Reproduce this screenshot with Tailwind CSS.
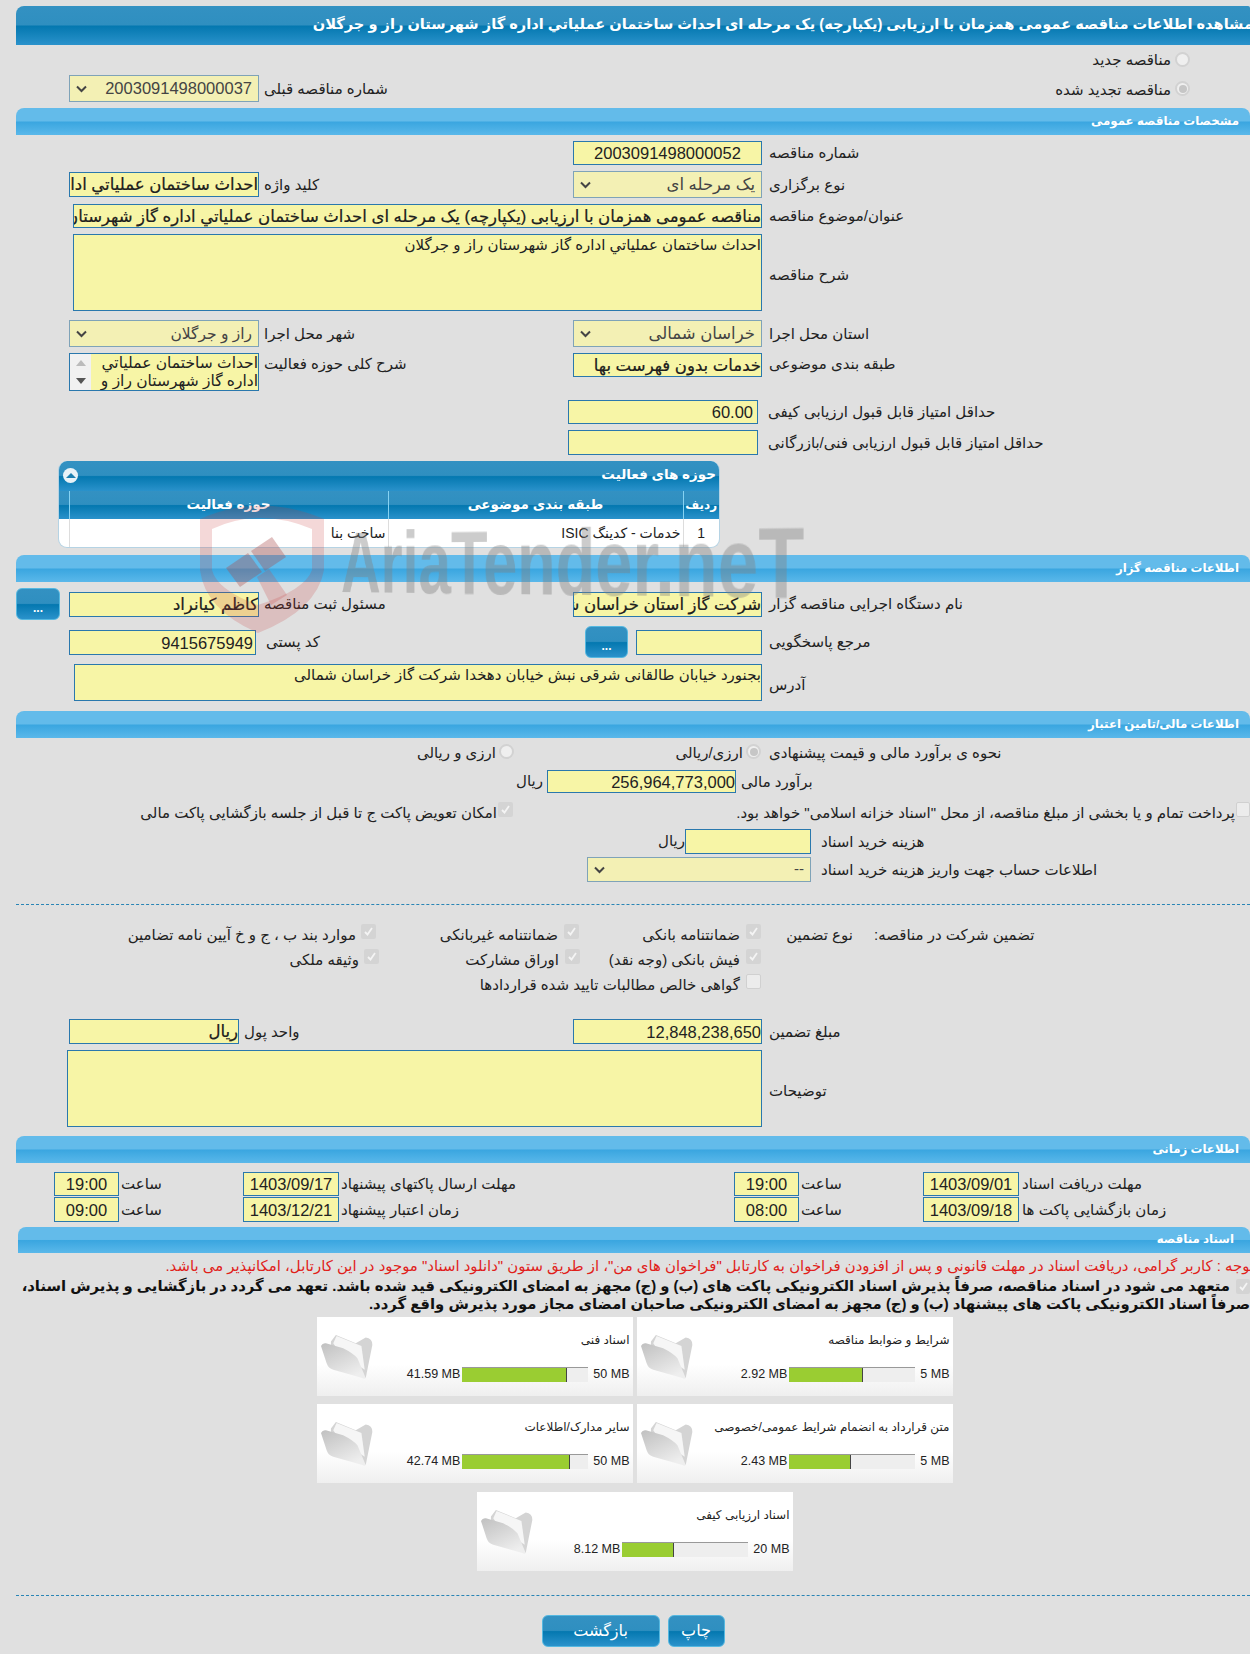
<!DOCTYPE html>
<html lang="fa" dir="rtl">
<head>
<meta charset="UTF-8">
<title>مشاهده اطلاعات مناقصه</title>
<script src="https://cdn.jsdelivr.net/npm/@tailwindcss/browser@4"></script>
</head>
<body class="relative w-[1250px] h-[1654px] overflow-hidden bg-[#e0e0e0] pt-[6px] text-[#222] text-[15px] font-['Liberation_Sans','DejaVu_Sans',sans-serif]">

<svg class="absolute w-0 h-0">
	<defs>
		<linearGradient id="folderFront" x1="0" y1="0" x2="0.6" y2="1">
			<stop offset="0" stop-color="#c0c0c0"/>
			<stop offset="1" stop-color="#eeeeee"/>
		</linearGradient>
	</defs>
	<symbol id="folder" viewBox="0 0 160 140">
		<path d="M33 25 L48 5 L108 30 L138 13 Q158 15 158 35 L138 135 L33 60 Z" fill="#d4d4d4"/>
		<path d="M40 30 L50 8 L125 38 L135 110 L60 60 Z" fill="#f6f6f6"/>
		<path d="M3 38 Q8 28 18 30 L70 45 Q100 60 113 75 L138 135 Q135 140 128 135 L40 110 Q25 105 20 90 Z" fill="url(#folderFront)"/>
	</symbol>
</svg>

<!-- title -->
<div class="ml-[16px] h-[39px] rounded-tl-[8px] rounded-tr-[2px] overflow-hidden bg-[linear-gradient(#3391c2_0%,#2f8fc0_48%,#0478b0_52%,#2a92cb_100%)] text-white font-bold text-[14.6px] leading-[37px] whitespace-nowrap"><span class="block mr-[-3px]">مشاهده اطلاعات مناقصه عمومی همزمان با ارزیابی (یکپارچه) یک مرحله ای احداث ساختمان عملیاتي اداره گاز شهرستان راز و جرگلان</span></div>

<!-- new / renewed -->
<div class="flex items-center h-[28px]">
	<span class="w-[15px] h-[15px] mr-[60px] rounded-full border-2 border-[#d2d2d2] bg-[#efefef]"></span>
	<span class="mr-[4px] mt-[3px]">مناقصه جدید</span>
</div>
<div class="flex items-center h-[27px] mt-[2px]">
	<span class="flex items-center justify-center w-[15px] h-[15px] mr-[60px] rounded-full border-2 border-[#d2d2d2] bg-[#efefef]"><span class="w-[8px] h-[8px] rounded-full bg-[#c6c6c6]"></span></span>
	<span class="w-[781px] mr-[4px] mt-[3px]">مناقصه تجدید شده</span>
	<div class="w-[126px] mt-[1px] whitespace-nowrap"><span class="float-left">شماره مناقصه قبلی</span></div>
	<div class="flex items-center justify-between w-[190px] h-[27px] mr-[5px] px-[6px] border border-[#7fa3b8] bg-[#f3f0b4] text-[#444] text-[16.5px]"><span>2003091498000037</span><svg class="w-[11px] h-[8px]" viewBox="0 0 11 8"><path d="M1 1.5 L5.5 6 L10 1.5" fill="none" stroke="#444" stroke-width="2"/></svg></div>
</div>

<!-- general -->
<div class="ml-[16px] h-[27px] mt-[6px] pr-[11px] rounded-t-[8px] bg-[linear-gradient(#63bbea_0%,#63bbea_48%,#3aa6e0_52%,#5ab8ea_100%)] text-white font-bold text-[11.8px] leading-[26px]">مشخصات مناقصه عمومی</div>

<div class="flex items-center h-[24px] mt-[6px]">
	<div class="w-[481px] mt-[1px]"><span class="float-left">شماره مناقصه</span></div>
	<div class="w-[189px] h-[24px] mr-[7px] px-[20px] border border-[#2a78ad] bg-[#f7f5a6] text-center text-[16.5px] leading-[23px]">2003091498000052</div>
</div>
<div class="flex items-center h-[27px] mt-[6px]">
	<div class="w-[481px] mt-[1px]"><span class="float-left">نوع برگزاری</span></div>
	<div class="flex items-center justify-between w-[189px] h-[27px] mr-[7px] px-[6px] border border-[#7fa3b8] bg-[#f3f0b4] text-[#444] text-[16.5px]"><span>یک مرحله ای</span><svg class="w-[11px] h-[8px]" viewBox="0 0 11 8"><path d="M1 1.5 L5.5 6 L10 1.5" fill="none" stroke="#444" stroke-width="2"/></svg></div>
	<div class="w-[309px] mt-[1px]"><span class="float-left">کلید واژه</span></div>
	<div class="w-[190px] h-[25px] mr-[5px] border border-[#2a78ad] bg-[#f7f5a6] text-[16.5px] leading-[23px] overflow-hidden whitespace-nowrap [-webkit-text-stroke:0.2px_#000]">احداث ساختمان عملياتي اداره گاز شهرستان راز و جرگلان</div>
</div>
<div class="flex items-center h-[24px] mt-[6px]">
	<div class="w-[481px] mt-[1px]"><span class="float-left">عنوان/موضوع مناقصه</span></div>
	<div class="w-[689px] h-[24px] mr-[7px] border border-[#2a78ad] bg-[#f7f5a6] text-[16.5px] leading-[22px] overflow-hidden whitespace-nowrap [-webkit-text-stroke:0.2px_#000]">مناقصه عمومی همزمان با ارزیابی (یکپارچه) یک مرحله ای احداث ساختمان عملیاتي اداره گاز شهرستان راز و جرگلان</div>
</div>
<div class="flex items-center h-[77px] mt-[6px]">
	<div class="w-[481px] mt-[5px]"><span class="float-left">شرح مناقصه</span></div>
	<div class="w-[689px] h-[77px] mr-[7px] border border-[#2a78ad] bg-[#f7f5a6] text-[15px] leading-[20px]">احداث ساختمان عملیاتي اداره گاز شهرستان راز و جرگلان</div>
</div>
<div class="flex items-center h-[27px] mt-[9px]">
	<div class="w-[481px] mt-[1px]"><span class="float-left">استان محل اجرا</span></div>
	<div class="flex items-center justify-between w-[189px] h-[27px] mr-[7px] px-[6px] border border-[#7fa3b8] bg-[#f3f0b4] text-[#444] text-[16.5px]"><span>خراسان شمالی</span><svg class="w-[11px] h-[8px]" viewBox="0 0 11 8"><path d="M1 1.5 L5.5 6 L10 1.5" fill="none" stroke="#444" stroke-width="2"/></svg></div>
	<div class="w-[309px] mt-[1px]"><span class="float-left">شهر محل اجرا</span></div>
	<div class="flex items-center justify-between w-[190px] h-[27px] mr-[5px] px-[6px] border border-[#7fa3b8] bg-[#f3f0b4] text-[#444] text-[15.5px]"><span>راز و جرگلان</span><svg class="w-[11px] h-[8px]" viewBox="0 0 11 8"><path d="M1 1.5 L5.5 6 L10 1.5" fill="none" stroke="#444" stroke-width="2"/></svg></div>
</div>
<div class="flex items-start h-[38px] mt-[6px]">
	<div class="w-[481px] h-[21px]"><span class="float-left">طبقه بندی موضوعی</span></div>
	<div class="w-[189px] h-[24px] mr-[7px] border border-[#2a78ad] bg-[#f7f5a6] text-[16.5px] leading-[23px] overflow-hidden whitespace-nowrap [-webkit-text-stroke:0.2px_#000]">خدمات بدون فهرست بها</div>
	<div class="w-[309px] h-[21px]"><span class="float-left">شرح کلی حوزه فعالیت</span></div>
	<div class="flex w-[190px] h-[38px] mr-[5px] border border-[#2a78ad] bg-[#f7f5a6] text-[15.5px] leading-[18px] overflow-hidden">
		<div class="flex-1 whitespace-nowrap overflow-hidden">احداث ساختمان عملیاتي<br>اداره گاز شهرستان راز و</div>
		<div class="flex flex-col justify-between items-center w-[21px] py-[6px] bg-[#f1f1f1]"><span class="w-0 h-0 border-x-[5px] border-x-transparent border-b-[6px] border-b-[#bbb]"></span><span class="w-0 h-0 border-x-[5px] border-x-transparent border-t-[6px] border-t-[#555]"></span></div>
	</div>
</div>
<div class="flex items-center h-[24px] mt-[9px]">
	<div class="w-[482px] mt-[1px]"><span class="float-left">حداقل امتیاز قابل قبول ارزیابی کیفی</span></div>
	<div class="w-[190px] h-[24px] mr-[10px] px-[4px] border border-[#2a78ad] bg-[#f7f5a6] text-[16.5px] leading-[23px]">60.00</div>
</div>
<div class="flex items-center h-[25px] mt-[6px]">
	<div class="w-[482px] mt-[1px]"><span class="float-left">حداقل امتیاز قابل قبول ارزیابی فنی/بازرگانی</span></div>
	<div class="w-[190px] h-[25px] mr-[10px] border border-[#2a78ad] bg-[#f7f5a6]"></div>
</div>

<!-- activity table -->
<div class="w-[662px] h-[87px] mt-[6px] mr-[530px] rounded-[9px] overflow-hidden border-b border-x border-[#b5d3e4] bg-white">
	<div class="relative h-[30px] pr-[3px] bg-[linear-gradient(#3391c2_0%,#2f8fc0_48%,#0478b0_52%,#2a92cb_100%)] text-white font-bold text-[13.5px] leading-[28px]">حوزه های فعالیت
		<span class="absolute left-[4px] top-[7px] flex items-center justify-center w-[15px] h-[15px] rounded-full bg-[#e8f2f7]"><span class="w-0 h-0 border-x-[5px] border-x-transparent border-b-[5px] border-b-[#1d7fb0]"></span></span>
	</div>
	<table class="w-full table-fixed border-collapse">
		<thead>
			<tr class="h-[28px] bg-[linear-gradient(#3391c2_0%,#2f8fc0_48%,#0478b0_52%,#2a92cb_100%)] text-white text-[13.5px]">
				<th class="w-[36px] font-bold text-[12px] border-l border-[#86d2f2]">ردیف</th>
				<th class="w-[295px] font-bold border-l border-[#86d2f2]">طبقه بندی موضوعی</th>
				<th class="w-[319px] font-bold border-l border-[#86d2f2]">حوزه فعالیت</th>
				<th class="w-[12px]"></th>
			</tr>
		</thead>
		<tbody>
			<tr class="h-[29px] text-[14px]">
				<td class="text-center border-l border-[#ddd]">1</td>
				<td class="pr-[2px] border-l border-[#ddd]">خدمات - کدینگ ISIC</td>
				<td class="pr-[2px] border-l border-[#ddd]">ساخت بنا</td>
				<td></td>
			</tr>
		</tbody>
	</table>
</div>

<!-- organizer -->
<div class="ml-[16px] h-[27px] mt-[7px] pr-[11px] rounded-t-[8px] bg-[linear-gradient(#63bbea_0%,#63bbea_48%,#3aa6e0_52%,#5ab8ea_100%)] text-white font-bold text-[11.8px] leading-[26px]">اطلاعات مناقصه گزار</div>

<div class="flex items-center h-[32px] mt-[6px]">
	<div class="w-[481px] mt-[1px]"><span class="float-left">نام دستگاه اجرایی مناقصه گزار</span></div>
	<div class="w-[189px] h-[25px] mr-[7px] border border-[#2a78ad] bg-[#f7f5a6] text-[16.5px] leading-[23px] overflow-hidden whitespace-nowrap [-webkit-text-stroke:0.2px_#000]">شرکت گاز استان خراسان شمالی</div>
	<div class="w-[309px] mt-[1px]"><span class="float-left">مسئول ثبت مناقصه</span></div>
	<div class="w-[190px] h-[25px] mr-[5px] border border-[#2a78ad] bg-[#f7f5a6] text-[16.5px] leading-[23px] overflow-hidden whitespace-nowrap [-webkit-text-stroke:0.2px_#000]">کاظم کیانراد</div>
	<button class="w-[44px] h-[32px] mr-[9px] pt-[8px] rounded-[6px] border border-[#55b8e0] bg-[linear-gradient(#3391c2_0%,#2f8fc0_48%,#0478b0_52%,#2a92cb_100%)] text-white font-bold text-[12px] leading-[20px]">...</button>
</div>
<div class="flex items-center h-[32px] mt-[6px]">
	<div class="w-[481px] mt-[1px]"><span class="float-left">مرجع پاسخگویی</span></div>
	<div class="w-[126px] h-[25px] mr-[7px] border border-[#2a78ad] bg-[#f7f5a6]"></div>
	<button class="w-[43px] h-[32px] mr-[8px] pt-[8px] rounded-[6px] border border-[#55b8e0] bg-[linear-gradient(#3391c2_0%,#2f8fc0_48%,#0478b0_52%,#2a92cb_100%)] text-white font-bold text-[12px] leading-[20px]">...</button>
	<div class="w-[319px] mt-[1px]"><span class="float-left">کد پستی</span></div>
	<div class="w-[187px] h-[25px] mr-[10px] px-[2px] border border-[#2a78ad] bg-[#f7f5a6] text-[16.5px] leading-[24px]">9415675949</div>
</div>
<div class="flex items-center h-[37px] mt-[6px]">
	<div class="w-[481px] mt-[5px]"><span class="float-left">آدرس</span></div>
	<div class="w-[688px] h-[37px] mr-[7px] border border-[#2a78ad] bg-[#f7f5a6] text-[15px] leading-[20px]">بجنورد خیابان طالقانی شرقی نبش خیابان دهخدا شرکت گاز خراسان شمالی</div>
</div>

<!-- finance -->
<div class="ml-[16px] h-[27px] mt-[10px] pr-[11px] rounded-t-[8px] bg-[linear-gradient(#63bbea_0%,#63bbea_48%,#3aa6e0_52%,#5ab8ea_100%)] text-white font-bold text-[11.8px] leading-[26px]">اطلاعات مالی/تامین اعتبار</div>

<div class="flex items-center h-[22px] mt-[3px]">
	<div class="w-[481px] mt-[3px]"><span class="float-left">نحوه ی برآورد مالی و قیمت پیشنهادی</span></div>
	<span class="flex items-center justify-center w-[15px] h-[15px] mr-[8px] mb-[1px] rounded-full border-2 border-[#d2d2d2] bg-[#efefef]"><span class="w-[8px] h-[8px] rounded-full bg-[#c6c6c6]"></span></span>
	<span class="w-[229px] mr-[3px] mt-[3px]">ارزی/ریالی</span>
	<span class="w-[15px] h-[15px] mb-[1px] rounded-full border-2 border-[#d2d2d2] bg-[#efefef]"></span>
	<span class="mr-[3px] mt-[3px]">ارزی و ریالی</span>
</div>
<div class="flex items-center h-[23px] mt-[7px]">
	<div class="w-[509px] mt-[1px]"><span class="float-left">برآورد مالی</span></div>
	<div class="w-[189px] h-[23px] mr-[5px] border border-[#2a78ad] bg-[#f7f5a6] text-[16.5px] leading-[22px]">256,964,773,000</div>
	<span class="mr-[4px]">ریال</span>
</div>
<div class="flex items-start h-[20px] mt-[9px]">
	<span class="w-[14px] h-[15px] rounded-[2px] border border-[#d0d0d0] bg-[#ececec]"></span>
	<span class="w-[722px] mr-[1px] leading-[21px]">پرداخت تمام و یا بخشی از مبلغ مناقصه، از محل "اسناد خزانه اسلامی" خواهد بود.</span>
	<span class="flex items-center justify-center w-[15px] h-[15px] rounded-[2px] bg-[#d4d4d4]"><svg class="w-[11px] h-[11px]" viewBox="0 0 11 11"><path d="M2 6 L4.5 8.5 L9 2" fill="none" stroke="#f4f4f4" stroke-width="1.8"/></svg></span>
	<span class="mr-[1px] leading-[21px]">امکان تعویض پاکت ج تا قبل از جلسه بازگشایی پاکت مالی</span>
</div>
<div class="flex items-center h-[25px] mt-[7px]">
	<div class="w-[429px] mt-[1px]"><span class="float-left">هزینه خرید اسناد</span></div>
	<div class="w-[126px] h-[25px] mr-[10px] border border-[#2a78ad] bg-[#f7f5a6]"></div>
	<span>ریال</span>
</div>
<div class="flex items-center h-[25px] mt-[3px]">
	<div class="w-[429px] mt-[1px]"><span class="float-left">اطلاعات حساب جهت واریز هزینه خرید اسناد</span></div>
	<div class="flex items-center justify-between w-[224px] h-[25px] mr-[10px] px-[6px] border border-[#7fa3b8] bg-[#f3f0b4] text-[#444] text-[15px]"><span>--</span><svg class="w-[11px] h-[8px]" viewBox="0 0 11 8"><path d="M1 1.5 L5.5 6 L10 1.5" fill="none" stroke="#444" stroke-width="2"/></svg></div>
</div>

<div class="ml-[16px] mt-[22px] border-t border-dashed border-[#2a85b5]"></div>

<!-- guarantee -->
<div class="flex items-start h-[25px] mt-[19px]">
	<div class="flex w-[489px] leading-[22px]"><div class="w-[376px]"><span class="float-left">تضمین شرکت در مناقصه:</span></div><span class="mr-[21px] whitespace-nowrap">نوع تضمین</span></div>
	<span class="flex items-center justify-center w-[15px] h-[15px] rounded-[2px] bg-[#d4d4d4]"><svg class="w-[11px] h-[11px]" viewBox="0 0 11 11"><path d="M2 6 L4.5 8.5 L9 2" fill="none" stroke="#f4f4f4" stroke-width="1.8"/></svg></span>
	<span class="w-[161px] mr-[6px] leading-[22px]">ضمانتنامه بانکی</span>
	<span class="flex items-center justify-center w-[15px] h-[15px] rounded-[2px] bg-[#d4d4d4]"><svg class="w-[11px] h-[11px]" viewBox="0 0 11 11"><path d="M2 6 L4.5 8.5 L9 2" fill="none" stroke="#f4f4f4" stroke-width="1.8"/></svg></span>
	<span class="w-[182px] mr-[6px] leading-[22px]">ضمانتنامه غیربانکی</span>
	<span class="flex items-center justify-center w-[15px] h-[15px] rounded-[2px] bg-[#d4d4d4]"><svg class="w-[11px] h-[11px]" viewBox="0 0 11 11"><path d="M2 6 L4.5 8.5 L9 2" fill="none" stroke="#f4f4f4" stroke-width="1.8"/></svg></span>
	<span class="mr-[5px] leading-[22px]">موارد بند ب ، ج و خ آیین نامه تضامین</span>
</div>
<div class="flex items-start h-[25px] pr-[489px]">
	<span class="flex items-center justify-center w-[15px] h-[15px] rounded-[2px] bg-[#d4d4d4]"><svg class="w-[11px] h-[11px]" viewBox="0 0 11 11"><path d="M2 6 L4.5 8.5 L9 2" fill="none" stroke="#f4f4f4" stroke-width="1.8"/></svg></span>
	<span class="w-[160px] mr-[6px] leading-[22px]">فیش بانکی (وجه نقد)</span>
	<span class="flex items-center justify-center w-[15px] h-[15px] rounded-[2px] bg-[#d4d4d4]"><svg class="w-[11px] h-[11px]" viewBox="0 0 11 11"><path d="M2 6 L4.5 8.5 L9 2" fill="none" stroke="#f4f4f4" stroke-width="1.8"/></svg></span>
	<span class="w-[180px] mr-[6px] leading-[22px]">اوراق مشارکت</span>
	<span class="flex items-center justify-center w-[15px] h-[15px] rounded-[2px] bg-[#d4d4d4]"><svg class="w-[11px] h-[11px]" viewBox="0 0 11 11"><path d="M2 6 L4.5 8.5 L9 2" fill="none" stroke="#f4f4f4" stroke-width="1.8"/></svg></span>
	<span class="mr-[5px] leading-[22px]">وثیقه ملکی</span>
</div>
<div class="flex items-start h-[25px] pr-[489px]">
	<span class="w-[15px] h-[15px] rounded-[2px] border border-[#d0d0d0] bg-[#ececec]"></span>
	<span class="mr-[6px] leading-[22px]">گواهی خالص مطالبات تایید شده قراردادها</span>
</div>

<div class="flex items-center h-[25px] mt-[20px]">
	<div class="w-[481px] mt-[1px]"><span class="float-left">مبلغ تضمین</span></div>
	<div class="w-[189px] h-[25px] mr-[7px] border border-[#2a78ad] bg-[#f7f5a6] text-[16.5px] leading-[24px]">12,848,238,650</div>
	<div class="w-[329px] mt-[1px]"><span class="float-left">واحد پول</span></div>
	<div class="w-[170px] h-[25px] mr-[5px] border border-[#2a78ad] bg-[#f7f5a6] text-[16.5px] leading-[23px] [-webkit-text-stroke:0.2px_#000]">ریال</div>
</div>
<div class="flex items-center h-[77px] mt-[6px]">
	<div class="w-[481px] mt-[5px]"><span class="float-left">توضیحات</span></div>
	<div class="w-[695px] h-[77px] mr-[7px] border border-[#2a78ad] bg-[#f7f5a6]"></div>
</div>

<!-- dates -->
<div class="ml-[16px] h-[27px] mt-[9px] pr-[11px] rounded-t-[8px] bg-[linear-gradient(#63bbea_0%,#63bbea_48%,#3aa6e0_52%,#5ab8ea_100%)] text-white font-bold text-[11.8px] leading-[26px]">اطلاعات زمانی</div>

<div class="flex items-center h-[24px] mt-[9px]">
	<div class="w-[228px] mt-[1px]"><span class="float-left">مهلت دریافت اسناد</span></div>
	<div class="w-[96px] h-[24px] mr-[3px] border border-[#2a78ad] bg-[#f7f5a6] text-center text-[16.5px] leading-[23px]">1403/09/01</div>
	<div class="w-[122px] mt-[1px]"><span class="float-left">ساعت</span></div>
	<div class="w-[65px] h-[24px] mr-[2px] border border-[#2a78ad] bg-[#f7f5a6] text-center text-[16.5px] leading-[23px]">19:00</div>
	<div class="w-[393px] mt-[1px]"><span class="float-left">مهلت ارسال پاکتهای پیشنهاد</span></div>
	<div class="w-[96px] h-[24px] mr-[2px] border border-[#2a78ad] bg-[#f7f5a6] text-center text-[16.5px] leading-[23px]">1403/09/17</div>
	<div class="w-[122px] mt-[1px]"><span class="float-left">ساعت</span></div>
	<div class="w-[65px] h-[24px] mr-[2px] border border-[#2a78ad] bg-[#f7f5a6] text-center text-[16.5px] leading-[23px]">19:00</div>
</div>
<div class="flex items-center h-[25px] mt-[1px]">
	<div class="w-[228px] mt-[1px]"><span class="float-left">زمان بازگشایی پاکت ها</span></div>
	<div class="w-[96px] h-[25px] mr-[3px] border border-[#2a78ad] bg-[#f7f5a6] text-center text-[16.5px] leading-[24px]">1403/09/18</div>
	<div class="w-[122px] mt-[1px]"><span class="float-left">ساعت</span></div>
	<div class="w-[65px] h-[25px] mr-[2px] border border-[#2a78ad] bg-[#f7f5a6] text-center text-[16.5px] leading-[24px]">08:00</div>
	<div class="w-[393px] mt-[1px]"><span class="float-left">زمان اعتبار پیشنهاد</span></div>
	<div class="w-[96px] h-[25px] mr-[2px] border border-[#2a78ad] bg-[#f7f5a6] text-center text-[16.5px] leading-[24px]">1403/12/21</div>
	<div class="w-[122px] mt-[1px]"><span class="float-left">ساعت</span></div>
	<div class="w-[65px] h-[25px] mr-[2px] border border-[#2a78ad] bg-[#f7f5a6] text-center text-[16.5px] leading-[24px]">09:00</div>
</div>

<!-- documents -->
<div class="ml-[18px] h-[26px] mt-[5px] pr-[16px] rounded-t-[8px] bg-[linear-gradient(#63bbea_0%,#63bbea_48%,#3aa6e0_52%,#5ab8ea_100%)] text-white font-bold text-[11.8px] leading-[25px]">اسناد مناقصه</div>

<div class="h-[20px] mt-[3px] mr-[-4px] text-[#e0201a] text-[14.9px] leading-[20px] whitespace-nowrap">توجه : کاربر گرامی، دریافت اسناد در مهلت قانونی و پس از افزودن فراخوان به کارتابل "فراخوان های من"، از طریق ستون "دانلود اسناد" موجود در این کارتابل، امکانپذیر می باشد.</div>
<div class="relative mt-[1px] h-[36px] text-[14.8px] font-bold leading-[18px] whitespace-nowrap text-[#111]">
	<span class="absolute top-[2px] right-0 flex items-center justify-center w-[14px] h-[15px] rounded-[2px] bg-[#d4d4d4]"><svg class="w-[11px] h-[11px]" viewBox="0 0 11 11"><path d="M2 6 L4.5 8.5 L9 2" fill="none" stroke="#f4f4f4" stroke-width="1.8"/></svg></span>
	<div class="pr-[20px]">متعهد می شود در اسناد مناقصه، صرفاً پذیرش اسناد الکترونیکی پاکت های (ب) و (ج) مجهز به امضای الکترونیکی قید شده باشد. تعهد می گردد در بازگشایی و پذیرش اسناد،</div>
	<div>صرفاً اسناد الکترونیکی پاکت های پیشنهاد (ب) و (ج) مجهز به امضای الکترونیکی صاحبان امضای مجاز مورد پذیرش واقع گردد.</div>
</div>

<div class="flex flex-wrap justify-center gap-x-[4px] gap-y-[8px] w-[637px] h-[254px] mt-[4px] mr-[297px]">
	<div class="flex items-stretch w-[316px] h-[79px] bg-[linear-gradient(#fff_60%,#efefef_100%)]">
		<div class="flex-1 pt-[12px] pr-[3px]">
			<div class="h-[24px] text-[12px] leading-[22px]">شرایط و ضوابط مناقصه</div>
			<div class="flex items-center justify-end gap-[2px] mt-[12px] text-[12.5px]" dir="ltr"><span>2.92 MB</span><span class="flex w-[126px] h-[15px] bg-[#eee] border-t border-[#999]"><span class="h-full bg-[#9acd32] border-r border-[#444]" style="width:58.4%"></span></span><span class="ml-[3px]">5 MB</span></div>
		</div>
		<svg class="w-[53px] h-[47px] mt-[16px] ml-[3px] mr-[1px]"><use href="#folder"/></svg>
	</div>
	<div class="flex items-stretch w-[316px] h-[79px] bg-[linear-gradient(#fff_60%,#efefef_100%)]">
		<div class="flex-1 pt-[12px] pr-[3px]">
			<div class="h-[24px] text-[12px] leading-[22px]">اسناد فنی</div>
			<div class="flex items-center justify-end gap-[2px] mt-[12px] text-[12.5px]" dir="ltr"><span>41.59 MB</span><span class="flex w-[126px] h-[15px] bg-[#eee] border-t border-[#999]"><span class="h-full bg-[#9acd32] border-r border-[#444]" style="width:83.2%"></span></span><span class="ml-[3px]">50 MB</span></div>
		</div>
		<svg class="w-[53px] h-[47px] mt-[16px] ml-[3px] mr-[1px]"><use href="#folder"/></svg>
	</div>
	<div class="flex items-stretch w-[316px] h-[79px] bg-[linear-gradient(#fff_60%,#efefef_100%)]">
		<div class="flex-1 pt-[12px] pr-[3px]">
			<div class="h-[24px] text-[12px] leading-[22px]">متن قرارداد به انضمام شرایط عمومی/خصوصی</div>
			<div class="flex items-center justify-end gap-[2px] mt-[12px] text-[12.5px]" dir="ltr"><span>2.43 MB</span><span class="flex w-[126px] h-[15px] bg-[#eee] border-t border-[#999]"><span class="h-full bg-[#9acd32] border-r border-[#444]" style="width:48.6%"></span></span><span class="ml-[3px]">5 MB</span></div>
		</div>
		<svg class="w-[53px] h-[47px] mt-[16px] ml-[3px] mr-[1px]"><use href="#folder"/></svg>
	</div>
	<div class="flex items-stretch w-[316px] h-[79px] bg-[linear-gradient(#fff_60%,#efefef_100%)]">
		<div class="flex-1 pt-[12px] pr-[3px]">
			<div class="h-[24px] text-[12px] leading-[22px]">سایر مدارک/اطلاعات</div>
			<div class="flex items-center justify-end gap-[2px] mt-[12px] text-[12.5px]" dir="ltr"><span>42.74 MB</span><span class="flex w-[126px] h-[15px] bg-[#eee] border-t border-[#999]"><span class="h-full bg-[#9acd32] border-r border-[#444]" style="width:85.5%"></span></span><span class="ml-[3px]">50 MB</span></div>
		</div>
		<svg class="w-[53px] h-[47px] mt-[16px] ml-[3px] mr-[1px]"><use href="#folder"/></svg>
	</div>
	<div class="flex items-stretch w-[316px] h-[79px] bg-[linear-gradient(#fff_60%,#efefef_100%)]">
		<div class="flex-1 pt-[12px] pr-[3px]">
			<div class="h-[24px] text-[12px] leading-[22px]">اسناد ارزیابی کیفی</div>
			<div class="flex items-center justify-end gap-[2px] mt-[12px] text-[12.5px]" dir="ltr"><span>8.12 MB</span><span class="flex w-[126px] h-[15px] bg-[#eee] border-t border-[#999]"><span class="h-full bg-[#9acd32] border-r border-[#444]" style="width:40.6%"></span></span><span class="ml-[3px]">20 MB</span></div>
		</div>
		<svg class="w-[53px] h-[47px] mt-[16px] ml-[3px] mr-[1px]"><use href="#folder"/></svg>
	</div>
</div>

<div class="ml-[16px] mt-[24px] border-t border-dashed border-[#2a85b5]"></div>

<div class="flex justify-center gap-[8px] ml-[16px] mt-[19px]">
	<button class="w-[57px] h-[32px] rounded-[6px] border border-[#55b8e0] bg-[linear-gradient(#3391c2_0%,#2f8fc0_48%,#0478b0_52%,#2a92cb_100%)] text-white text-[16px]">چاپ</button>
	<button class="w-[118px] h-[32px] rounded-[6px] border border-[#55b8e0] bg-[linear-gradient(#3391c2_0%,#2f8fc0_48%,#0478b0_52%,#2a92cb_100%)] text-white text-[16px]">بازگشت</button>
</div>

<!-- watermark -->
<div class="absolute top-[495px] left-[195px] w-[640px] h-[145px] pointer-events-none" dir="ltr">
	<svg class="absolute top-0 left-0 w-[135px] h-[145px]" viewBox="0 0 135 145">
		<path fill-rule="evenodd" d="M5 24 Q65 -3 129 24 L129 75 Q122 115 63 138 Q10 115 5 75 Z M17 34 L17 75 Q22 95 63 110 Q110 95 117 75 L117 34 Q65 12 17 34 Z" fill="#c83c3c" fill-opacity="0.2"/>
		<path d="M31 73 L53 58 L67 77 L45 92 Z" fill="#a84a4a" fill-opacity="0.35"/>
		<path d="M56 56 L77 42 L91 62 L70 76 Z" fill="#a84a4a" fill-opacity="0.35"/>
		<path d="M62 82 L74 74 L92 100 L76 110 Z" fill="#c84c4c" fill-opacity="0.25"/>
	</svg>
	<div class="absolute top-[24px] left-[146px] w-[460px] text-[86px] leading-[86px] font-bold text-[#808080]/40 whitespace-nowrap origin-left [transform:perspective(900px)_rotateY(-20deg)_scaleX(0.67)]">AriaTender.neT</div>
</div>

</body>
</html>
